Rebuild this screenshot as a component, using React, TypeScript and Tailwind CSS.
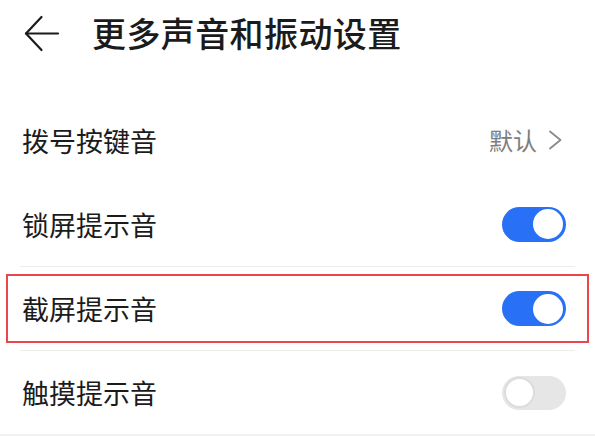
import React from 'react';

type Row = { label: string; kind: 'link' | 'on' | 'off'; value?: string; marked?: boolean };

const rows: Row[] = [
  { label: '拨号按键音', kind: 'link', value: '默认' },
  { label: '锁屏提示音', kind: 'on' },
  { label: '截屏提示音', kind: 'on', marked: true },
  { label: '触摸提示音', kind: 'off' },
];

function Toggle({ on }: { on: boolean }) {
  return on ? (
    <div className="flex h-[35px] w-[64px] items-center justify-end rounded-full bg-[#2870f5] pr-[3px]">
      <div className="h-[30px] w-[30px] rounded-full bg-white" />
    </div>
  ) : (
    <div className="flex h-[34px] w-[64px] items-center rounded-full bg-[#e6e6e6] pl-[2px]">
      <div className="h-[31px] w-[31px] rounded-full border-2 border-[#dcdcdc] bg-white" />
    </div>
  );
}

export default function App() {
  return (
    <div
      className="h-[436px] w-[595px] overflow-hidden bg-white text-[#1b1b1b]"
      style={{ fontFamily: '"Noto Sans CJK SC", "Noto Sans", sans-serif' }}
    >
      {/* header */}
      <div className="flex h-[66px] items-center pl-[23px]">
        <svg width="37" height="37" viewBox="0 0 37 37" fill="none" stroke="#1b1b1b" strokeWidth="2.2" strokeLinecap="round" strokeLinejoin="round">
          <path d="M3 18.5H35" />
          <path d="M18.5 2L3 18.5L18.5 35" />
        </svg>
        <h1 className="ml-[32px] text-[34px] font-medium leading-none tracking-[0.4px]">更多声音和振动设置</h1>
      </div>

      {/* list */}
      <div className="mt-[32px]">
        {rows.map((r, i) => (
          <div
            key={r.label}
            className={`relative mx-[20px] flex h-[84px] items-center justify-between pl-[2px] pr-[9px] ${
              i >= 2 ? 'border-t-[1.5px] border-[#ececec]' : ''
            }`}
          >
            <span className="text-[27px] leading-none">{r.label}</span>
            {r.kind === 'link' ? (
              <div className="mr-[4px] flex items-center gap-[11px]">
                <span className="text-[24px] leading-none text-[#7d7d7d]">{r.value}</span>
                <svg width="14" height="20" viewBox="0 0 14 20" fill="none" stroke="#8a8a8a" strokeWidth="1.8" strokeLinecap="round" strokeLinejoin="round">
                  <path d="M2 1.5L12.5 10L2 18.5" />
                </svg>
              </div>
            ) : (
              <Toggle on={r.kind === 'on'} />
            )}
            {r.marked && (
              <div className="pointer-events-none absolute -left-[14px] -right-[14px] bottom-[7px] top-[7px] border-2 border-[#e9474b]" />
            )}
          </div>
        ))}
        <div className="h-[4px] w-full bg-[#f2f2f2]" />
      </div>
    </div>
  );
}
